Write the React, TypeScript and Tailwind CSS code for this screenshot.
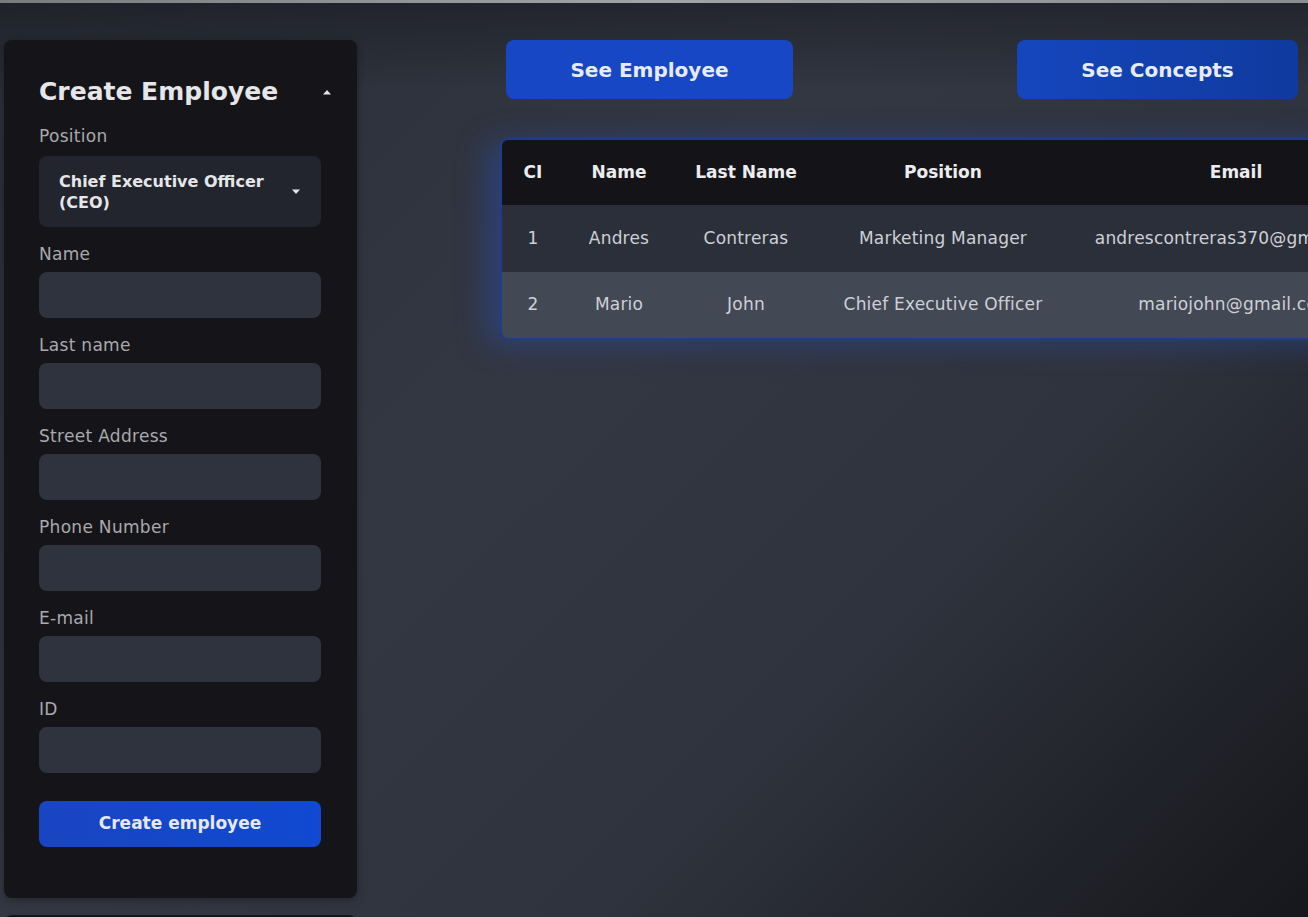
import React from "react";

const fields = ["Name", "Last name", "Street Address", "Phone Number", "E-mail", "ID"];

const rows = [
  { ci: "1", name: "Andres", last: "Contreras", position: "Marketing Manager", email: "andrescontreras370@gmail.com" },
  { ci: "2", name: "Mario", last: "John", position: "Chief Executive Officer", email: "mariojohn@gmail.com" },
];

function Caret({ up }: { up?: boolean }) {
  return (
    <svg width="10" height="6" viewBox="0 0 10 6" className="shrink-0">
      <path d={up ? "M1 5.5 L5 1 L9 5.5 Z" : "M1 0.5 L5 5 L9 0.5 Z"} fill="#e5e5e5" />
    </svg>
  );
}

export default function App() {
  return (
    <div
      className="relative h-[917px] w-[1308px] overflow-hidden bg-[linear-gradient(to_bottom,rgba(22,24,30,0.55),transparent_90px),linear-gradient(135deg,#2a2e37_0%,#333742_40%,#2f333d_68%,#16171b_100%)] text-[#e8e8ea]"
      style={{ fontFamily: '"DejaVu Sans", "Open Sans", sans-serif' }}
    >
      <div className="h-[3px] bg-[linear-gradient(to_right,#7a7b7e,#a3a4a7,#8c8d90)]" />

      <div className="flex pt-[37px]">
        <div className="ml-[4px] flex w-[353px] shrink-0 flex-col">
          <aside className="flex flex-col rounded-lg bg-[#151519] px-[35px] pb-[51px] pt-[36px] shadow-[0_2px_8px_rgba(0,0,0,0.3)]">
            <div className="mr-[-10px] flex items-center justify-between">
              <h1 className="whitespace-nowrap text-[25px] font-bold leading-[32px] text-[#e6e6e8]">
                Create Employee
              </h1>
              <Caret up />
            </div>

            <label className="mt-[18px] text-[17px] leading-[20px] tracking-[0.3px] text-[#a9a9ae]">Position</label>
            <div className="mt-[10px] flex h-[71px] w-[282px] items-center justify-between rounded-lg bg-[#22252e] pl-[20px] pr-[20px]">
              <span className="w-[216px] text-[16px] font-bold leading-[21px] text-[#e6e6e8]">
                Chief Executive Officer (CEO)
              </span>
              <Caret />
            </div>

            {fields.map((f) => (
              <div key={f} className="mt-[17px] flex w-[282px] flex-col">
                <label className="text-[17px] leading-[20px] tracking-[0.3px] text-[#a9a9ae]">{f}</label>
                <input className="mt-[8px] h-[46px] rounded-lg bg-[#2f333d] px-3 text-[15px] outline-none" />
              </div>
            ))}

            <button className="mt-[28px] h-[46px] w-[282px] rounded-lg bg-[linear-gradient(to_right,#1a45c2,#1049d2)] text-[17px] font-bold text-[#e6e8f0]">
              Create employee
            </button>
          </aside>
          <div className="mt-[17px] h-[200px] rounded-lg bg-[#151519]" />
        </div>

        <main className="ml-[143px] flex shrink-0 flex-col">
          <div className="flex pl-[6px]">
            <button className="h-[59px] w-[287px] rounded-lg bg-[#1747c4] text-[20px] font-bold text-[#e8ebf5]">
              See Employee
            </button>
            <button className="ml-[224px] h-[59px] w-[281px] rounded-lg bg-[linear-gradient(to_right,#1546bd,#0f3a9e)] text-[20px] font-bold text-[#e8ebf5]">
              See Concepts
            </button>
          </div>

          <div className="mt-[39px] w-[906px] overflow-hidden rounded-lg border-2 border-[#1f3c8c] shadow-[-14px_4px_30px_rgba(40,80,190,0.42)]">
            <table className="w-full table-fixed border-collapse text-center">
              <colgroup>
                <col className="w-[62px]" />
                <col className="w-[110px]" />
                <col className="w-[144px]" />
                <col className="w-[250px]" />
                <col className="w-[336px]" />
              </colgroup>
              <thead>
                <tr className="h-[65px] bg-[#141418] text-[17px] font-bold text-[#ececee]">
                  <th>CI</th>
                  <th>Name</th>
                  <th className="whitespace-nowrap">Last Name</th>
                  <th>Position</th>
                  <th>Email</th>
                </tr>
              </thead>
              <tbody className="text-[17px] tracking-[0.2px] text-[#cfd0d4]">
                {rows.map((r, i) => (
                  <tr key={r.ci} className={i === 0 ? "h-[67px] bg-[#2b2f3a]" : "h-[66px] bg-[#434855]"}>
                    <td>{r.ci}</td>
                    <td>{r.name}</td>
                    <td>{r.last}</td>
                    <td className="whitespace-nowrap">{r.position}</td>
                    <td className="whitespace-nowrap">{r.email}</td>
                  </tr>
                ))}
              </tbody>
            </table>
          </div>
        </main>
      </div>
    </div>
  );
}
